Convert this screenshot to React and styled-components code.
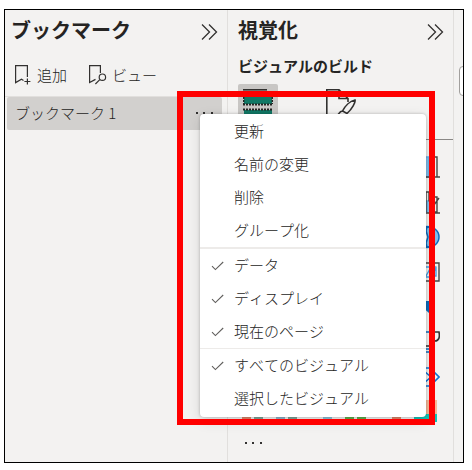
import React, { useState } from 'react';
import styled, { createGlobalStyle } from 'styled-components';


// -------------------STYLES------------------- //

const GlobalStyle = createGlobalStyle`
  * {
    box-sizing: border-box;
  }
  body {
    margin: 0;
    background: #fff;
    color: #252423;
    font-family: 'Noto Sans CJK JP', 'Noto Sans', sans-serif;
    font-size: 15px;
    font-kerning: none;
  }
  button {
    padding: 0;
    border: 0;
    background: none;
    color: inherit;
    font: inherit;
    cursor: pointer;
  }
  h1, h2, ul {
    margin: 0;
    padding: 0;
  }
  svg {
    display: block;
    flex: none;
  }
`;

const PageStyle = styled.div`
  min-height: 100vh;
  display: flex;
  padding: 9px 8px 7px 4px;
`;

const WindowStyle = styled.main`
  position: relative;
  flex: 1;
  display: flex;
  border: 1px solid #000;
  background: #f3f2f1;
  overflow: hidden;
`;

const PaneStyle = styled.section`
  flex: ${({ $grow }) => $grow} 1 0;
  min-width: 0;
  display: flex;
  flex-direction: column;
  border-right: 1px solid #e1dfdd;
`;

const PaneHeader = styled.header`
  display: flex;
  align-items: center;
  justify-content: space-between;
  height: 40px;
  padding: 0 9px 0 ${({ $left }) => $left}px;
`;

const PaneTitle = styled.h1`
  font-size: 20px;
  line-height: 30px;
  font-weight: bold;
`;

const CollapseButton = styled.button`
  padding-top: 3px;
`;

const Toolbar = styled.div`
  display: flex;
  align-items: center;
  gap: 20px;
  height: 47px;
  padding: 4px 8px 0;
  border-bottom: 1px solid #e1dfdd;
`;

const ToolButton = styled.button`
  display: flex;
  align-items: center;
  gap: 5px;
  line-height: 24px;
  font-weight: 300;
`;

const BookmarkRow = styled.div`
  display: flex;
  align-items: center;
  justify-content: space-between;
  height: 33px;
  margin: 0 5px 0 2px;
  padding: 0 8px 2px;
  border-radius: 2px;
  background: #d2d0ce;
  font-weight: 300;
`;

const SubTitle = styled.h2`
  padding: 4px 10px;
  font-size: 15px;
  line-height: 24px;
  font-weight: bold;
`;

const BuildTabs = styled.div`
  display: flex;
  gap: 42px;
  height: 58px;
  padding: 2px 10px 0;
  border-bottom: 1px solid #8a8886;
`;

const BuildTab = styled.button`
  display: flex;
  justify-content: center;
  width: 40px;
  height: 40px;
  padding-top: 5px;
  border-radius: 2px;
  background: ${({ $active }) => ($active ? '#c8c6c4' : 'transparent')};
`;

const VisualColumn = styled.div`
  display: grid;
  grid-auto-rows: 24px;
  align-items: center;
  justify-items: end;
  gap: 11px;
  padding: 15px 13px 11px 0;
`;

const VisualRow = styled.div`
  display: flex;
  justify-content: space-between;
  padding: 0 16px 0 14px;
`;

const MoreVisuals = styled.button`
  align-self: flex-start;
  margin: 19px 15px 0;
`;

const EdgeStrip = styled.aside`
  width: 9px;
  padding: 56px 0 0 5px;
`;

const EdgeTab = styled.button`
  display: block;
  width: 16px;
  height: 30px;
  border: 1px solid #a19f9d;
  border-radius: 4px;
  background: #fff;
`;

const MenuStyle = styled.div`
  position: absolute;
  top: 104px;
  left: 195px;
  width: 226px;
  padding: 1px 0 2px;
  border-radius: 4px;
  background: #fff;
  box-shadow: 0 0 3px rgba(0, 0, 0, 0.25), 0 4px 14px rgba(0, 0, 0, 0.12);
`;

const MenuGroup = styled.ul`
  list-style: none;
  border-top: ${({ $line }) => $line || 0}px solid #edebe9;
`;

const MenuItem = styled.button`
  display: grid;
  grid-template-columns: 34px 1fr;
  align-items: center;
  width: 100%;
  height: 33px;
  padding-bottom: 2px;
  color: #252423;
  font-weight: 300;
  text-align: left;

  svg {
    margin: 2px 0 0 11px;
  }
`;

const HighlightFrame = styled.div`
  position: absolute;
  top: 81px;
  left: 172px;
  width: 258px;
  height: 334px;
  border: 6px solid #f00;
  pointer-events: none;
`;


// -------------------ICONS------------------- //

const Chevrons = () => (
  <svg width="18" height="18" viewBox="0 0 18 18" fill="none" stroke="#323130" strokeWidth="1.3">
    <path d="M2 1.5 9.5 9 2 16.5M9 1.5 16.5 9 9 16.5" />
  </svg>
);

const Dots = () => (
  <svg width="20" height="4" viewBox="0 0 20 4" fill="#323130">
    <path d="M2 1h2v2H2zM9 1h2v2H9zM17 1h2v2h-2z" />
  </svg>
);

const AddBookmark = () => (
  <svg width="19" height="22" viewBox="0 0 19 22" fill="none" stroke="#323130" strokeWidth="1.2">
    <path d="M14.4 13V1.6H2.6V18.6L8.5 15.2L10.5 16.4M14.4 14.5V20.5M11.4 17.5H17.4" />
  </svg>
);

const ViewBookmark = () => (
  <svg width="20" height="22" viewBox="0 0 20 22" fill="none" stroke="#323130" strokeWidth="1.2">
    <path d="M13.4 9V1.6H2.6V18.6L8.5 15.4M12.8 15.6L8.4 20" />
    <circle cx="15.4" cy="13.2" r="3.2" />
  </svg>
);

const CheckMark = () => (
  <svg width="13" height="10" viewBox="0 0 13 10" fill="none" stroke="#605e5c" strokeWidth="1.1">
    <path d="M1 5.2 4.4 8.6 12.2 1" />
  </svg>
);

const BuildIcon = () => (
  <svg width="30" height="34" viewBox="0 0 30 34">
    <path d="M0 .8h24" stroke="#323130" strokeWidth="1.6" />
    <path d="M1 4h28v11H1zM1 21h28v11H1z" fill="#117865" />
    <path d="M0 15.5h30M0 20.5h30" stroke="#252423" strokeWidth="2" strokeDasharray="2 1" />
    <path d="M.7 5v10M29.3 5v10" stroke="#252423" strokeWidth="1.4" strokeDasharray="2 1" />
  </svg>
);

const FormatIcon = () => (
  <svg width="32" height="34" viewBox="0 0 32 34" fill="none" stroke="#323130" strokeWidth="1.6">
    <path d="M2.8 34V.8H15L24 9.5V13M15 .8V9.5H24" />
    <path d="M18.5 22C21 17 26 12 31 11C31.8 13 28 20 23 24.5ZM18.5 22C15.5 22 15 25 13 27C17 28.5 21 27.5 23 24.5" />
  </svg>
);

const ColumnChart = () => (
  <svg width="22" height="22" viewBox="0 0 22 22" fill="none" stroke="#484644" strokeWidth="1.4">
    <path d="M3 1h8v20H3z" fill="#83beec" stroke="#69afe5" />
    <path d="M14 7V1h5v20h-5V7M4 21h18" />
  </svg>
);

const LineChart = () => (
  <svg width="22" height="23" viewBox="0 0 22 23" fill="none" stroke="#484644" strokeWidth="1.4">
    <path d="M3 10h7v11H3z" fill="#83beec" stroke="#69afe5" />
    <path d="M8 21V1h3v9l5 4 5-7M15 6h4v15h-4zM4 22h18" />
  </svg>
);

const PieChart = () => (
  <svg width="24" height="24" viewBox="0 0 24 24" stroke="#0f6cbd" strokeWidth="1.5">
    <path d="M11 1.5C18 1.5 23 6 23 12S18 22.5 11 22.5L10 18L12 12L10 6Z" fill="#83beec" />
    <path d="M8 2h7M8 22h7" strokeWidth="2" />
  </svg>
);

const ImageTable = () => (
  <svg width="22" height="20" viewBox="0 0 22 20" fill="none" stroke="#484644" strokeWidth="1.4">
    <path d="M1 1h20v18H1z" />
    <path d="M4 5h14M4 15h10M8 14l4-7 3 3 3-4v8h-5l3-4" stroke="#4a9ee0" />
  </svg>
);

const FilledMap = () => (
  <svg width="22" height="22" viewBox="0 0 22 22">
    <path d="M3 5h10v3h2l-3 3 2 8-3-2-9-8z" fill="#0f6cbd" />
  </svg>
);

const ScriptIcon = () => (
  <svg width="22" height="24" viewBox="0 0 22 24" fill="none" strokeWidth="1.6">
    <path d="M6 2h8M6 19h9M6 22h9" stroke="#0f6cbd" />
    <path d="M16 2h5c1 5 0 9-4 9h-3M8 16h8" stroke="#323130" />
  </svg>
);

const Diamond = () => (
  <svg width="22" height="22" viewBox="0 0 22 22" fill="none" stroke="#1572d0" strokeWidth="1.6">
    <path d="M4 2h8l9 9-9 9H4M6 5l7 6-7 6" />
  </svg>
);

const CustomVisual = ({ left, right }) => (
  <svg width="23" height="19" viewBox="0 0 23 19">
    <path d="M0 0h9v19H0z" fill={left} />
    <path d="M12 0h9v19h-9z" fill={right} />
  </svg>
);

const GradientVisual = () => (
  <svg width="23" height="22" viewBox="0 0 23 22">
    <path d="M0 0h23v14H0z" fill="#f7b999" />
    <path d="M0 14h23v8H0z" fill="#12c4b8" />
  </svg>
);


// ------------------COMPONENT------------------ //

const actions = ['更新', '名前の変更', '削除', 'グループ化'];
const contents = ['データ', 'ディスプレイ', '現在のページ'];
const scopes = ['すべてのビジュアル', '選択したビジュアル'];

const BookmarkMenu = () => {
  const [checked, setChecked] = useState(contents);
  const [scope, setScope] = useState(scopes[0]);

  const toggle = (label) => {
    setChecked(checked.includes(label) ? checked.filter(c => c !== label) : [...checked, label]);
  };

  return (
    <MenuStyle role="menu">
      <MenuGroup role="group">
        {actions.map(label => (
          <li key={label} role="none"><MenuItem role="menuitem"><span />{label}</MenuItem></li>
        ))}
      </MenuGroup>
      <MenuGroup role="group" $line={2}>
        {contents.map(label => (
          <li key={label} role="none">
            <MenuItem role="menuitemcheckbox" aria-checked={checked.includes(label)} onClick={() => toggle(label)}>
              {checked.includes(label) ? <CheckMark /> : <span />}{label}
            </MenuItem>
          </li>
        ))}
      </MenuGroup>
      <MenuGroup role="group" $line={1}>
        {scopes.map(label => (
          <li key={label} role="none">
            <MenuItem role="menuitemradio" aria-checked={scope === label} onClick={() => setScope(label)}>
              {scope === label ? <CheckMark /> : <span />}{label}
            </MenuItem>
          </li>
        ))}
      </MenuGroup>
    </MenuStyle>
  );
};

const App = () => (
  <PageStyle>
    <GlobalStyle />
    <WindowStyle>
      <PaneStyle $grow={223}>
        <PaneHeader $left={6}>
          <PaneTitle>ブックマーク</PaneTitle>
          <CollapseButton aria-label="折りたたむ"><Chevrons /></CollapseButton>
        </PaneHeader>
        <Toolbar>
          <ToolButton><AddBookmark />追加</ToolButton>
          <ToolButton><ViewBookmark />ビュー</ToolButton>
        </Toolbar>
        <BookmarkRow>
          ブックマーク 1
          <button aria-label="その他"><Dots /></button>
        </BookmarkRow>
      </PaneStyle>
      <PaneStyle $grow={226}>
        <PaneHeader $left={10}>
          <PaneTitle>視覚化</PaneTitle>
          <CollapseButton aria-label="折りたたむ"><Chevrons /></CollapseButton>
        </PaneHeader>
        <SubTitle>ビジュアルのビルド</SubTitle>
        <BuildTabs>
          <BuildTab $active aria-label="ビルド"><BuildIcon /></BuildTab>
          <BuildTab aria-label="書式"><FormatIcon /></BuildTab>
        </BuildTabs>
        <VisualColumn>
          <ColumnChart />
          <LineChart />
          <PieChart />
          <ImageTable />
          <FilledMap />
          <ScriptIcon />
          <Diamond />
        </VisualColumn>
        <VisualRow>
          <CustomVisual left="#e0886c" right="#7fa69a" />
          <CustomVisual left="#8fb4cc" right="#7fa69a" />
          <CustomVisual left="none" right="#8cc4dc" />
          <CustomVisual left="#5fb04c" right="#5fb04c" />
          <CustomVisual left="none" right="#e0886c" />
          <GradientVisual />
        </VisualRow>
        <MoreVisuals aria-label="その他のビジュアル"><Dots /></MoreVisuals>
      </PaneStyle>
      <EdgeStrip><EdgeTab aria-label="データ" /></EdgeStrip>
      <BookmarkMenu />
      <HighlightFrame />
    </WindowStyle>
  </PageStyle>
);

export default App;
